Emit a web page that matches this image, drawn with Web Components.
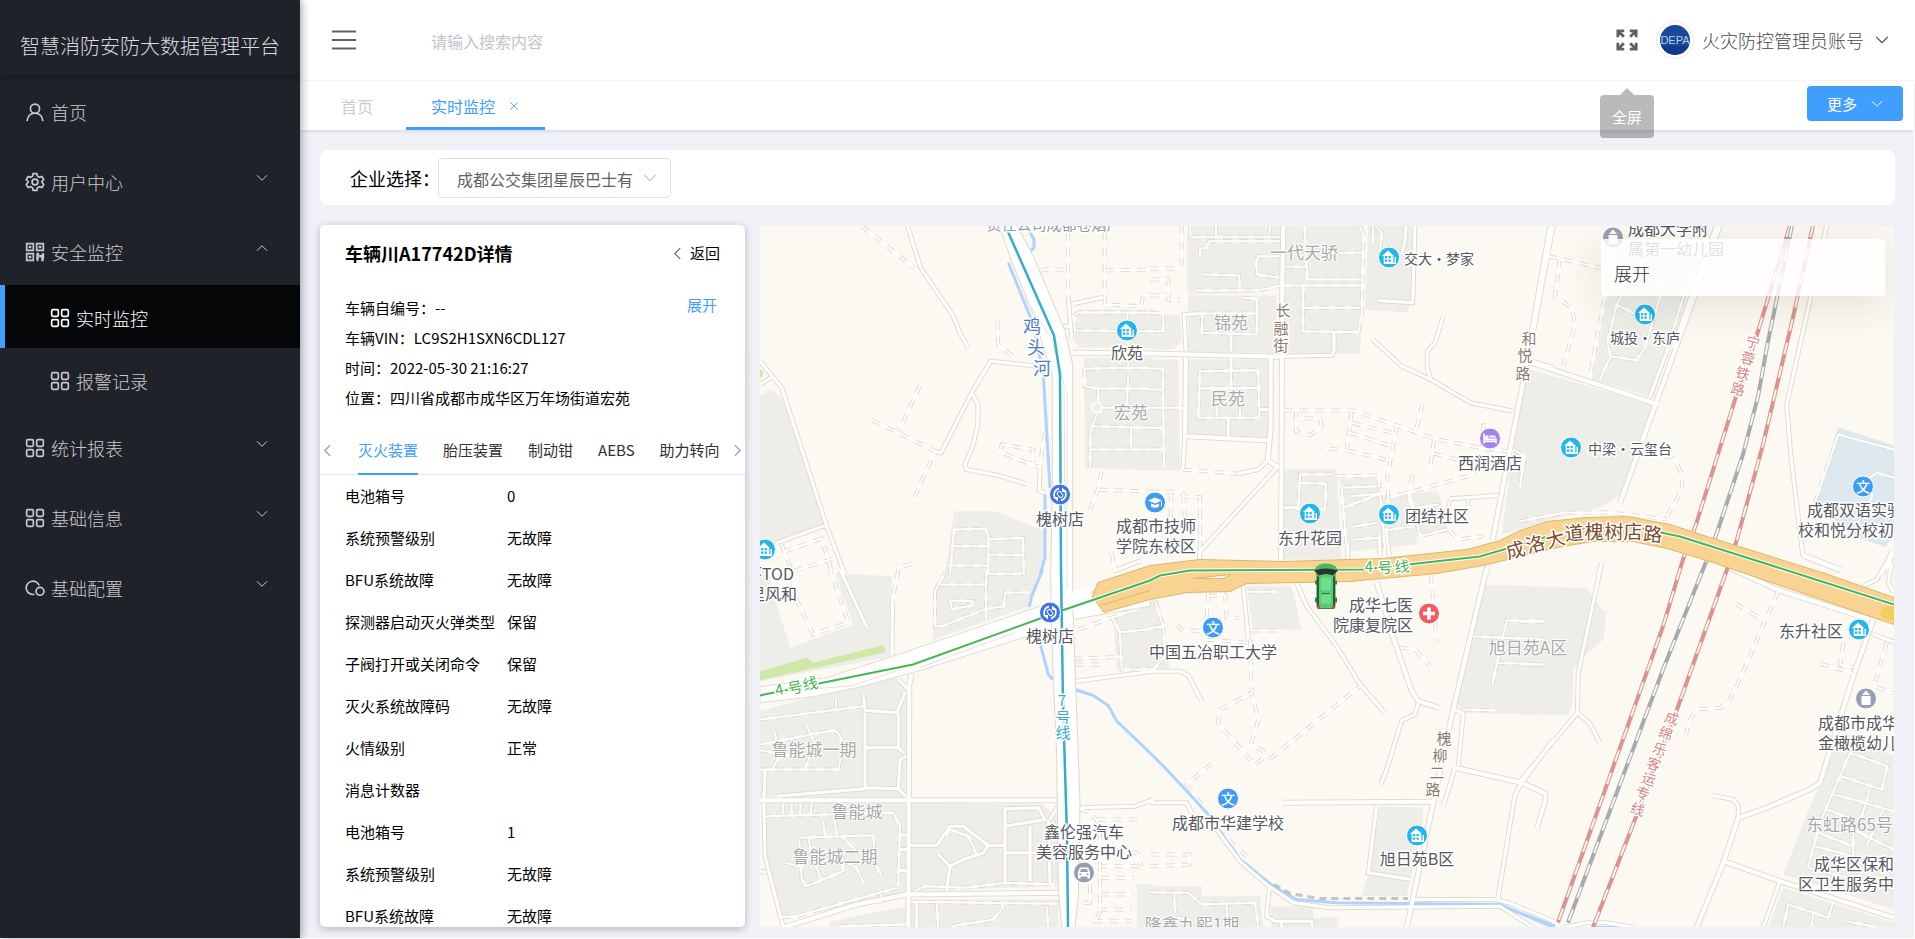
<!DOCTYPE html>
<html lang="zh-CN">
<head>
<meta charset="utf-8">
<title>智慧消防安防大数据管理平台</title>
<style>
  html, body { margin: 0; }
  body { background: #fff; color: #000; font: 400 16px/24px "Noto Sans CJK SC", "Noto Sans", sans-serif; }
</style>
</head>
<body>
<fire-app></fire-app>
<script>
const ICONS = {
  user: '<circle cx="12" cy="8" r="5.5"/><path d="M2.500 23c.6-6 4.300-9.500 9.500-9.500s8.900 3.500 9.500 9.500"/>',
  gear: '<circle cx="12" cy="12" r="3.500"/><path d="M9.800 2h4.400l.8 3 2.300 1.300 3-.9 2.200 3.800-2.200 2.200v1.200l2.200 2.200-2.200 3.800-3-.9-2.300 1.300-.8 3H9.800l-.8-3-2.300-1.300-3 .9-2.200-3.800 2.200-2.200v-1.200L1.500 9.200l2.200-3.800 3 .9L9 5z"/>',
  grid: '<rect x="2" y="2" width="8" height="8" rx="1.500"/><rect x="14" y="2" width="8" height="8" rx="1.500"/><rect x="2" y="14" width="8" height="8" rx="1.500"/><rect x="14" y="14" width="8" height="8" rx="1.500"/>',
  qr: '<path d="M2 2h8v8H2zM14 2h8v8h-8zM2 14h8v8H2zM5.500 5.500h1v1h-1zM17.500 5.500h1v1h-1zM5.500 17.500h1v1h-1z"/><path stroke-width="3" d="M14 14.500h3M15 14v7M20 18h3M21.500 13.500v3M21 19v4M14 21.500h2M17 17h3"/>',
  loops: '<path d="M11.500 19.500A8 8 0 1 1 17 9"/><circle cx="18" cy="16" r="4.700"/>',
  down: '<path d="M2 6.500l10 10 10-10"/>',
  up: '<path d="M2 17.500l10-10 10 10"/>',
  left: '<path d="M17 2L7 12l10 10"/>',
  right: '<path d="M7 2l10 10L7 22"/>',
  close: '<path d="M3 3l18 18M21 3L3 21"/>',
  menu: '<path d="M0 3.500h24M0 12h24M0 20.500h24"/>',
  full: '<path stroke-width="3" d="M2 9V2h7M2.500 2.500L8.500 8.500M15 2h7v7M21.500 2.500l-6 6M2 15v7h7M2.500 21.500l6-6M22 15v7h-7M21.500 21.500l-6-6"/>'
};

/* Registers an element whose open shadow root is filled by render(host). */
function define(name, render) {
  customElements.define(name, class extends HTMLElement {
    connectedCallback() {
      if (this.shadowRoot) return;
      const t = document.createElement('template');
      t.innerHTML = render(this);
      this.attachShadow({ mode: 'open' }).append(t.content.cloneNode(true));
    }
  });
}

define('line-icon', el => `
<style>
  :host { display: block; flex: none; width: var(--icon, 20px); height: var(--icon, 20px); }
  svg { display: block; width: 100%; height: 100%; fill: none; stroke: currentColor; stroke-width: var(--stroke, 2); }
</style>
<svg viewBox="0 0 24 24" aria-hidden="true">${ICONS[el.getAttribute('name')]}</svg>`);

define('nav-item', el => `
<style>
  :host { display: block; }
  a { box-sizing: border-box; display: flex; align-items: center; height: 70px; padding: 3px 32px 0 25px;
      color: #c8c9cc; font-size: 18px; text-decoration: none; }
  :host([sub]) a { height: 63px; padding-left: 50px; }
  :host([active]) a { color: #fff; background: #050608; box-shadow: inset 5px 0 #409eff; }
  span { flex: 1; padding-left: 6px; }
  .arrow { --icon: 12px; margin-bottom: 7px; }
</style>
<a href="#"><line-icon name="${el.getAttribute('icon')}"></line-icon><span><slot></slot></span>
${el.hasAttribute('arrow') ? `<line-icon class="arrow" name="${el.getAttribute('arrow')}"></line-icon>` : ''}</a>`);

define('side-bar', () => `
<style>
  :host { display: block; width: 300px; flex: none; background: #20222a; box-shadow: 2px 0 8px rgba(0,21,41,.35); z-index: 2; font-weight: 300; }
  h1 { box-sizing: border-box; height: 75px; margin: 0; padding: 18px 0 0 20px; color: #dcdde0;
       font-size: 20px; line-height: 56px; font-weight: inherit; box-shadow: 0 6px 2px -1px rgba(0,0,0,.12); }
</style>
<h1>智慧消防安防大数据管理平台</h1>
<nav>
  <nav-item icon="user">首页</nav-item>
  <nav-item icon="gear" arrow="down">用户中心</nav-item>
  <nav-item icon="qr" arrow="up">安全监控</nav-item>
  <nav-item icon="grid" sub active>实时监控</nav-item>
  <nav-item icon="grid" sub>报警记录</nav-item>
  <nav-item icon="grid" arrow="down">统计报表</nav-item>
  <nav-item icon="grid" arrow="down">基础信息</nav-item>
  <nav-item icon="loops" arrow="down">基础配置</nav-item>
</nav>`);

define('top-bar', () => `
<style>
  :host { box-sizing: border-box; display: flex; align-items: center; height: 81px; padding: 0 25px 0 32px; background: #fff; border-bottom: 1px solid #f4f4f5; color: #5f6063; }
  button { padding: 0; border: 0; background: none; color: inherit; font: inherit; display: flex; align-items: center; }
  .menu { --icon: 24px; }
  input { flex: 1; min-width: 0; margin: 2px 0 0 75px; padding: 0; border: 0; outline: 0; font: inherit; }
  input::placeholder { color: #c0c4cc; opacity: 1; }
  .full { position: relative; --icon: 22px; margin-right: 18px; }
  .tip { position: absolute; z-index: 5; top: 66px; left: 50%; transform: translateX(-50%); padding: 10px 12px 9px; border-radius: 4px;
         background: rgba(0,0,0,.27); color: #fff; font-size: 15px; line-height: 24px; white-space: nowrap; }
  .tip::before { content: ""; position: absolute; top: -7px; left: 50%; margin-left: -7px; border: 7px solid transparent; border-top: 0; border-bottom-color: rgba(0,0,0,.27); }
  .avatar { box-sizing: border-box; width: 38px; height: 38px; border: 1px solid #ececec; border-radius: 50%; margin-right: 8px; }
  .avatar svg { display: block; width: 36px; height: 36px; }
  .user { font-size: 18px; font-weight: 300; color: #47484b; --icon: 14px; gap: 11px; }
</style>
<button class="menu" aria-label="菜单"><line-icon name="menu"></line-icon></button>
<input type="text" placeholder="请输入搜索内容" aria-label="搜索">
<button class="full" aria-label="全屏"><line-icon name="full"></line-icon><span class="tip">全屏</span></button>
<div class="avatar"><svg viewBox="0 0 36 36"><defs><clipPath id="c"><circle cx="18" cy="18" r="15"/></clipPath></defs>
<g clip-path="url(#c)"><rect width="36" height="36" fill="#174a9c"/><rect y="24" width="36" height="12" fill="#12398a"/></g>
<text x="18" y="22" text-anchor="middle" font-family="Liberation Sans, sans-serif" font-size="11" font-weight="400" fill="#b9cde9">DEPA</text></svg></div>
<button class="user">火灾防控管理员账号<line-icon name="down"></line-icon></button>`);

define('tab-strip', () => `
<style>
  :host { display: flex; height: 49px; padding-right: 11px; background: #fff; box-shadow: 0 1px 4px rgba(0,0,0,.12); }
  a { box-sizing: border-box; display: flex; align-items: center; padding: 4px 33px 0 41px; color: #ccc; text-decoration: none; border-bottom: 3px solid transparent; }
  a.on { padding: 4px 26px 0 25px; color: #409eff; border-color: #409eff; --icon: 10px; gap: 14px; }
  button { display: flex; align-items: center; gap: 14px; height: 35px; margin: 5px 0 0 auto; padding: 0 20px; border: 0; border-radius: 4px;
           background: #409eff; color: #fff; font: inherit; font-size: 15px; --icon: 12px; }
</style>
<a href="#">首页</a><a href="#" class="on">实时监控<line-icon name="close"></line-icon></a>
<button>更多<line-icon name="down"></line-icon></button>`);

define('company-filter', () => `
<style>
  :host { display: flex; align-items: center; height: 55px; padding-left: 30px; border-radius: 8px; background: #fff; }
  label { font-size: 18px; width: 88px; white-space: nowrap; }
  .box { position: relative; width: 233px; --icon: 14px; color: #c0c4cc; }
  select { display: block; box-sizing: border-box; width: 100%; height: 40px; padding: 2px 36px 0 18px; appearance: none; border: 1px solid #dcdfe6; border-radius: 4px;
           background: #fff; color: #606266; font: inherit; text-overflow: clip; }
  line-icon { position: absolute; right: 14px; top: 13px; pointer-events: none; }
</style>
<label for="s">企业选择：</label>
<div class="box"><select id="s"><option>成都公交集团星辰巴士有限公司</option></select><line-icon name="down"></line-icon></div>`);

const ROWS = [['电池箱号','0'],['系统预警级别','无故障'],['BFU系统故障','无故障'],['探测器启动灭火弹类型','保留'],['子阀打开或关闭命令','保留'],
  ['灭火系统故障码','无故障'],['火情级别','正常'],['消息计数器',''],['电池箱号','1'],['系统预警级别','无故障'],['BFU系统故障','无故障']];

define('vehicle-panel', () => `
<style>
  :host { display: flex; flex-direction: column; width: 425px; flex: none; overflow: hidden; box-sizing: border-box; border-radius: 5px; background: #fff;
          box-shadow: 0 2px 8px rgba(0,0,0,.25); font-size: 15px; }
  header { display: flex; justify-content: space-between; align-items: center; padding: 16px 25px 0; height: 24px; }
  h2 { margin: 0; font-size: 18px; line-height: 24px; }
  button { padding: 0; border: 0; background: none; color: inherit; font: inherit; }
  .back { display: flex; align-items: center; gap: 6px; --icon: 13px; }
  .back line-icon { color: #606266; }
  .info { display: flex; justify-content: space-between; align-items: flex-start; padding: 28px 28px 0 25px; }
  .info button { color: #409eff; }
  p { margin: 0; line-height: 30px; }
  .tabs { flex: none; display: flex; align-items: center; height: 51px; margin-top: 10px; border-bottom: 1px solid #e4e7ed; --icon: 13px; color: #909399; }
  .scroll { display: flex; flex: 1; min-width: 0; gap: 25px; overflow: hidden; height: 52px; margin: 0 10px 0 23px; }
  .scroll a { flex: none; box-sizing: border-box; height: 52px; padding-top: 15px; color: #303133; text-decoration: none; border-bottom: 2px solid transparent; white-space: nowrap; }
  .scroll a.on { color: #409eff; border-color: #409eff; }
  .tabs line-icon { margin: 4px 1px 0; }
  .list { flex: 1; min-height: 0; overflow: hidden; }
  table { border-collapse: collapse; margin-left: 25px; }
  th, td { height: 42px; padding: 0; text-align: left; font-weight: inherit; }
  th { width: 162px; }
</style>
<header><h2>车辆川A17742D详情</h2><button class="back"><line-icon name="left"></line-icon>返回</button></header>
<div class="info"><div><p>车辆自编号：--</p><p>车辆VIN：LC9S2H1SXN6CDL127</p><p>时间：2022-05-30 21:16:27</p><p>位置：四川省成都市成华区万年场街道宏苑</p></div><button>展开</button></div>
<div class="tabs"><line-icon name="left"></line-icon>
<div class="scroll"><a href="#" class="on">灭火装置</a><a href="#">胎压装置</a><a href="#">制动钳</a><a href="#">AEBS</a><a href="#">助力转向装置</a></div>
<line-icon name="right"></line-icon></div>
<div class="list"><table>${ROWS.map(r => `<tr><th scope="row">${r[0]}</th><td>${r[1]}</td></tr>`).join('')}</table></div>`);

/* Map data. Each sheet has its origin on the map plane and is surveyed at three units per map unit. */
const SHEETS = { A:[750,215], B:[1150,215], C:[1520,215], D:[750,570], E:[1150,540], F:[1520,560] };
const AREAS = {
A:`30,545 62,525 95,550 230,930 130,970 30,1005;612,890 735,890 885,950 885,1040 865,1080 585,1080;985,285 1210,285 1210,400 990,400 972,380;1002,430 1210,430 1210,768 1005,760`,
B:`0,300 90,300 95,380 70,405 0,405;0,435 85,435 90,768 0,768;115,33 390,33 390,215 320,235 115,240 110,220 110,75;115,243 380,243 380,415 115,412;400,33 640,33 635,330 630,418 405,418;655,33 795,33 785,260 770,295 645,285;118,435 355,435 355,675 105,660;400,765 560,765 575,1035 400,1035;570,795 690,785 690,845 865,830 895,955 800,970 800,990 600,1010`,
C:`10,460 415,575 310,835 250,875 60,925 -55,960;290,100 540,130 400,550 215,495`,
D:`30,0 425,20 425,260 30,335;585,0 870,0 840,110 550,210 550,60;30,425 340,340 440,325 470,370 465,685 30,680;40,700 470,700 470,970 105,1050 50,900;480,700 880,705 925,750 925,950 480,965;240,1055 470,1010 480,990 925,990 925,1076 240,1076;1160,945 1210,945 1210,1076 1160,1076;1090,140 1210,100 1210,300 1100,305`,
E:`0,1040 155,1040 155,1070 330,1070 340,1165 0,1165;360,1100 490,1100 490,1135 565,1135 565,1165 365,1165;0,180 25,180 60,385 0,395;290,140 425,140 455,270 310,275;690,800 820,805 820,850 770,1070 635,1070 655,1000`,
F:`-110,75 200,86 240,140 250,155 260,155 250,240 200,285 160,330 160,420 145,467 -165,460 -190,430 -135,170;975,520 1122,590 1122,1050 790,945 870,740 950,560;790,985 1122,1090 1122,1104 745,1104`};
const WATER = {
A:`835,45 852,75 852,100 838,112;775,145 850,330 880,480 900,820;885,840 885,1030 870,1080`,
D:`878,0 845,80 838,112;870,220 895,315 908,330;975,360 1030,378 1075,408 1100,455 1200,550`,
E:`0,640 50,690 170,820 270,960 370,1040 440,1080 560,1090 1050,1095 1220,1168`,
F:`0,1060 105,1100;215,1104 300,1104`};
/* wide streets */
const WIDE = {
A:`968,415 1210,417`,
B:`0,417 395,427;400,33 397,200 393,1040;362,430 362,640 353,738 385,758;108,430 105,665 360,678;1200,40 1120,500 1028,975;1140,440 1210,460`,
C:`98,33 30,400;20,440 415,570;600,33 300,865;590,33 460,400`,
D:`478,360 475,1074;30,692 925,692;100,1074 320,1005 470,975 925,970;485,310 475,360`,
E:`1010,85 905,530 770,1165;680,130 735,310 785,455 805,485 868,505;398,790 845,787;915,685 1115,730`,
F:`655,775 610,910 530,1104;610,905 780,965 1122,1075;620,20 770,90 1050,180;1060,180 1000,350 900,670 870,690 740,745 655,775`};
/* narrow streets */
const STREET = {
A:`472,33 512,160 610,305 632,360 655,400;30,440 95,520 230,935 285,1080;30,510 70,485;905,470 865,455 722,440 665,535 573,715 550,710;665,535 684,570 683,630 670,690 645,750 650,765 745,783 828,808;885,835 868,828 870,750;80,985 228,932;955,250 965,370;970,268 1060,248;940,335 965,335;1090,1070 1170,1040`,
B:`400,33 400,100;108,410 102,300 155,297;243,365 243,410;395,425 545,422 552,410 552,355;105,665 98,765;385,755 150,1010 148,1035;353,738 325,765 265,778;668,375 755,455 842,495 962,565 1090,590;842,495 832,460 832,410 855,385 878,310;795,33 788,265 685,258;768,33 765,80 755,120;235,610 235,665;243,430 243,470;330,585 355,585;402,880 445,880;593,1035 593,985;690,1025 688,960;718,1025 708,940;900,853 1045,843;1020,985 1010,1080`,
C:`920,33 800,570 812,720 848,1020 965,1065;390,545 445,400;1115,1010 1085,1080;1122,1010 1100,1065;245,1045 235,1080`,
D:`270,0 350,172;428,100 426,255;345,430 345,655 445,658 468,682;345,535 445,535 462,550;340,375 345,422 440,430 465,370;445,430 445,535;468,560 450,570 445,658;80,680 345,658;45,600 42,690;42,700 45,860 100,1074;30,905 50,910;765,715 765,940;765,718 865,715 885,750 765,770;480,828 560,828 600,770 640,770 715,828 700,850 640,870 600,890 565,855;600,890 590,960;715,828 765,828;765,850 925,848;840,770 840,935;895,750 900,940;445,330 475,360;900,750 925,710;990,715 1155,710 1210,690;975,335 1210,305;500,1000 500,1074;470,797 450,797;470,840 450,840;470,903 450,903`,
E:`0,395 90,395 115,408 155,485;280,140 295,300;440,130 470,200 560,320 630,435 705,520;805,490 795,525 755,543 710,690 692,735;910,510 940,520 925,680;915,685 880,800;1115,730 1185,765 1185,790 1162,865;1115,730 1210,600;1115,730 1095,765 1043,1080;0,790 110,790 125,820;170,830 270,965 350,1035 430,1090 540,1105 1050,1100 1150,1165;790,1080 1043,1080 1090,1095 1210,1145;358,1045 350,1130 375,1145 485,1145 487,1165;680,800 655,1000 785,1020;395,1145 395,1165`,
F:`245,10 175,340 172,460 208,490 240,550;172,460 80,570 0,665 75,700 78,715 50,805;578,708 640,720 655,740 655,775;850,-10 965,35;1105,0 1070,60 1030,80;1115,10 1105,70 1122,100;1060,225 1122,248;780,965 730,1104;130,1104 200,1090 260,1090 340,1104`};
/* lanes and alleys with broken kerbs */
const LANE = {
A:`335,35 430,110 495,162;742,320 745,390 805,440;510,512 445,655;365,617 445,655 555,710 490,855;885,655 868,760 750,712 755,690 850,706 848,742;955,50 955,250;1064,50 1064,270 1175,275 1178,243 1200,243;870,170 880,165 950,165;1064,168 1200,165;975,350 970,305 985,293 1200,295;975,348 1200,350;1132,295 1135,455;1003,462 1200,460;1003,462 1005,515 1045,522 1200,522;1045,522 1045,560;1055,580 1200,580;1135,485 1130,580;1040,600 1022,650 1020,755;1030,635 1200,640;1020,705 1200,705;1143,640 1143,700;1055,770 1045,820 1020,890;1045,825 1200,832;600,1080 612,945 705,943 715,960 715,1080;610,995 712,995;595,1053 715,1053;715,975 818,970 822,1080;715,1020 818,1022;95,990 130,1080;100,1012 215,972 245,1070;130,1070 255,1030;485,1048 445,1060;1085,1015 1095,1070`,
B:`95,33 95,150 85,162 0,162;0,195 55,195 55,255 90,258;0,243 55,243;0,295 40,297 40,350 0,350;122,65 120,33;122,68 390,68;360,33 358,60;198,33 198,65;390,80 178,80 170,100 150,103 150,125;388,125 325,125 318,145 322,180 388,190;158,180 267,182 270,225;138,228 320,228 395,213 635,213;405,157 468,157 465,33;468,100 472,195 635,195;468,115 640,115;630,38 640,60 635,300 625,353 458,350 460,215;458,280 630,280;278,250 320,253 322,360 155,355 157,297 320,297;0,462 38,462 42,755;0,525 40,525;0,580 105,580;0,640 40,640;0,705 40,705;147,470 325,467 328,610 145,610 150,470;150,522 328,520;243,470 243,518;200,520 200,605;270,520 270,605;98,765 265,778;0,832 95,832 105,845 150,848 150,1005;62,835 62,925;100,840 105,920;670,33 668,90;680,38 695,55 690,110;400,588 610,588 760,640 850,672 1000,702 1090,712;605,590 590,708 515,700;605,625 735,657;598,655 730,697;590,708 720,738;740,635 712,790 715,865;818,568 795,655;852,675 840,770;850,717 985,750 1000,670 1000,632 1020,635;985,750 970,780 780,833 720,848;788,780 775,845 790,890;438,590 438,650 480,662 515,635 510,612 440,612;1090,705 1125,725 1110,815;548,780 450,780 445,885 525,885 528,808 450,805;560,785 685,783 688,815 575,820;600,845 690,838 580,880;608,937 680,925;615,975 690,970;575,820 590,1000;690,840 705,1000;780,835 810,965 890,945;800,880 865,870;705,948 790,935;900,853 895,880 900,950 925,975 1000,965;955,850 955,880`,
C:`120,130 105,245 155,280 165,330 130,455;85,125 240,160;270,160 210,485;330,200 290,270 262,385 272,425 240,495;272,425 350,437 375,400 425,230 415,200 320,175;290,270 385,320;325,100 325,150 540,100;455,360 530,120;0,920 130,895 250,893 330,900 440,915;440,905 485,830 487,780 460,730 430,725;5,720 10,740 0,820;885,865 955,660 1122,705;1122,790 1070,775 1050,790 1055,850 1015,925`,
D:`445,0 425,105 425,200;95,0 190,195 295,158 240,0;570,45 708,45 710,0;708,45 708,150;715,13 820,13 822,0;600,93 670,95 665,108 605,120 600,93;555,65 555,170 575,170 710,118 762,110 765,70 838,68;555,65 585,10;30,450 340,410;258,390 258,415;30,600 265,600 280,525 265,490 250,482 30,525;72,482 90,560 65,600;168,465 195,520 165,600;30,542 130,560;40,740 430,730 450,770 445,950;98,700 98,735;125,700 125,735;152,700 150,735;185,700 182,735;148,810 155,930 170,950 280,905 278,860;150,805 370,797 375,880 395,920;175,805 185,855 215,935;220,755 225,800;255,755 260,800;275,800 325,850;105,880 150,890;290,880 320,895 340,940;95,1042 135,1042 440,955;390,960 395,985;495,965 525,950 650,955 765,940 915,945;590,950 590,965;590,800 600,780 655,800 680,855;485,997 925,1003;560,1005 565,1074;605,1070 730,1050 758,1015 755,1003;890,1010 895,1074;270,1070 470,1065;1085,140 1110,190 1115,300 1210,300;1110,188 1210,178;985,180 1200,105;970,268 1110,262;975,285 1060,285;1040,750 1160,750;1045,850 1160,850 1175,890;1045,890 1165,890;1050,925 1150,925;1050,975 1150,975;1045,1020 1145,1020;1030,1055 1145,1055;990,720 1025,730 1050,770 1050,1030 1035,1055;1000,1000 1020,1000 1020,930`,
E:`0,265 40,262 15,185;40,262 45,350 10,390;175,160 165,300 290,310;175,170 225,165 230,235 265,235;290,157 380,157;305,273 395,273;80,255 95,272 165,275;300,300 305,460 212,510 203,550 315,677 345,650 340,635 303,615 325,540 305,460;358,660 630,440;750,325 795,330 840,380;843,105 850,200 862,310;970,290 1180,300;1180,243 1070,243 1050,330 1027,435;1040,370 1180,375;940,510 1037,513;185,672 110,735 165,810;0,945 118,945 118,975 0,980;200,870 290,950;0,1058 115,1060 155,1095 315,1090 325,1165;73,1060 75,1120;230,1095 230,1130;75,1135 120,1140`,
F:`0,187 72,187;0,315 72,315;775,95 735,185 690,290 650,380 625,430 600,445 530,450 510,480 498,525;648,133 735,185;970,250 960,315 1000,325;900,312 1000,342;1100,250 1062,380 1122,402;990,580 1102,620 1085,690 965,650;945,705 1122,755;990,580 900,790 865,920;1050,690 1020,790;920,750 1000,780;1090,750 1040,860;895,820 1000,860;885,860 1000,890;1000,810 1000,890;1000,810 1122,870;865,925 1122,990;805,1035 925,1075 940,1025;805,1035 790,1100;980,1085 1075,1104;880,1065 875,1100`};
const HOUSE='<path fill="#fff" fill-rule="evenodd" d="M-1-7L-7-1.500h1.700V6.500H7V-.5H5.500v5.500H4.300V-1.500H5zM-4-1.500h2.300V.8H-4zM-.5-1.500h2.300V.8H-.5zM-4 2h2.300v2.300H-4zM-.5 2h2.300v2.300H-.5z"/>';
const GLYPH = {
  house:['#22b5ee',HOUSE],
  school:['#3e9bf6','<text text-anchor="middle" y="5" font-size="14" font-weight="500" fill="#fff">文</text>'],
  cap:['#3e9bf6','<path fill="#fff" d="M0-5l7 3-7 3-7-3zM-4 1l4 1.500L4 1v3Q0 6.500-4 4zM6-1h1v5H6z"/>'],
  metro:['#3f74e4','<path fill="none" stroke="#fff" stroke-width="1.600" d="M-4.200 4.200A6 6 0 0 1-1-5.900M4.200-4.200A6 6 0 0 1 1 5.900"/><path fill="#fff" d="M-7 2.500h5v4.500zM7-2.500H2V-7z"/><rect x="-2" y="-3" width="4" height="6" rx="1" fill="none" stroke="#fff" transform="rotate(-35)"/>'],
  hotel:['#a583ee','<path stroke="#fff" stroke-width="1.600" fill="none" d="M-6-5V5M6 0v5M-6 3H6"/><path fill="#fff" d="M-5-3h3.500v3H6v2H-5zM-.5-3H4q2 0 2 2H-.5z"/>'],
  hospital:['#f25c5e','<path fill="#fff" d="M-1.800-6h3.600v4.200H6v3.600H1.800V6h-3.600V1.800H-6v-3.600h4.200z"/>'],
  kid:['#979fb7','<path fill="#fff" d="M-1-7.500h2L2-5h1.500v1.500h-7V-5H-2zM-4.500-2.500h9v8q0 1-1 1h-7q-1 0-1-1z"/>'],
  car:['#979fb7','<path fill="#fff" fill-rule="evenodd" d="M-4-5h8L6-.5V6H3.500V4h-7v2H-6V-.5zM-3-3.500L-4-.5h8l-1-3zM-4.500 1h2v1.500h-2zM2.500 1h2v1.500h-2z"/>']};
const POIS = [['house',1127,331],['house',765,550],['metro',1060,495],['metro',1050,613],['car',1084,873],['cap',1155,503],['house',1389,258],['hotel',1490,439],['house',1310,514],['house',1389,515],['kid',1613,238],['house',1645,315],['house',1571,448],['school',1863,487],['school',1213,628],['hospital',1429,614],['school',1228,799],['house',1417,836],['house',1859,630],['kid',1866,699]];
/* label, x, y, style, anchor; a bar starts a second line */
const LABELS = [['欣苑',1127,353],['槐树店',1060,519],['环TOD',794,574,'p','end'],['里风和',797,594,'p','end'],['槐树店',1050,636],['鑫伦强汽车|美容服务中心',1084,832],['成都市技师|学院东校区',1156,526],
['交大·梦家',1404,259,'q','start'],['西润酒店',1490,463],['东升花园',1310,538],['团结社区',1405,516,'p','start'],['成都大学附|属第一幼儿园',1628,229,'p','start'],['城投·东庐',1645,338,'q'],['中梁·云玺台',1588,449,'q','start'],
['成都双语实验学',1807,510,'p','start'],['校和悦分校初中',1798,530,'p','start'],['中国五冶职工大学',1213,652],['成华七医|院康复院区',1413,605,'p','end'],['成都市华建学校',1228,823],['旭日苑B区',1417,859],['东升社区',1843,631,'p','end'],
['成都市成华区|金橄榄幼儿园',1818,723,'p','start'],['成华区保和社',1814,864,'p','start'],['区卫生服务中心',1798,884,'p','start'],
['责任公司成都卷烟厂',1054,225,'t'],['宏苑',1131,413,'g'],['鲁能城一期',814,750,'g'],['鲁能城',857,812,'g'],['鲁能城二期',835,857,'g'],['一代天骄',1304,253,'g'],['锦苑',1231,323,'g'],['民苑',1228,399,'g'],['旭日苑A区',1528,648,'g'],['隆鑫九熙1期',1192,925,'g'],['东虹路65号院',1806,825,'g','start']];
/* names that follow a line: style, then char,x,y,angle */
const RUNS = [['w','鸡,1032,325 头,1036,346 河,1042,367'],['m4','4,779,689,-12 号,795,687,-12 线,810,683,-12'],['m4','4,1369,566 号,1385,567,-3 线,1402,566,-5'],['m7','7,1062,700 号,1063,717 线,1063,732'],
['s','长,1283,310 融,1281,328 街,1281,345'],['s','和,1529,338 悦,1525,355 路,1523,373'],['s','槐,1444,738 柳,1440,755 二,1437,772 路,1433,789'],
['h','成,1515,549,-15 洛,1535,543,-15 大,1555,538,-15 道,1574,532,-5 槐,1594,531 树,1614,531 店,1633,531 路,1653,533,5'],
['r','宁,1753,342,15 蓉,1748,358,15 铁,1743,373,15 路,1738,389,15'],['r','成,1672,718,18 绵,1666,733,18 乐,1660,749,18 客,1654,764,18 运,1649,779,18 专,1643,793,18 线,1638,809,18']];
const shapes = (set, close) => Object.entries(set).map(([k, v]) => v.split(';').map(l =>
  'M' + l.split(' ').map(p => { const [x, y] = p.split(','); return (SHEETS[k][0] + x / 3).toFixed(1) + ' ' + (SHEETS[k][1] + y / 3).toFixed(1); }).join('L') + (close ? 'z' : '')).join('')).join('');
const road = (set, w, casing, dash) => { const d = shapes(set);
  return [`<path d="${d}" fill="none" stroke="#e1dccf" stroke-width="${casing}"${dash ? ' stroke-dasharray="9 7"' : ''}/>`, `<path d="${d}" fill="none" stroke="#fff" stroke-width="${w}" stroke-linejoin="round"/>`]; };
const rail = (pts, c) => `<polyline points="${pts}" fill="none" stroke="${c}" stroke-width="4"/><polyline points="${pts}" fill="none" stroke="#fcf6f1" stroke-width="2" stroke-dasharray="12 12"/>`;
const label = ([t, x, y, c = 'p', a = 'middle']) => { const [one, two] = t.split('|');
  return `<text class="label ${c}" x="${x}" y="${y - 1}" text-anchor="${a}">${one}${two ? `<tspan x="${x}" dy="20">${two}</tspan>` : ''}</text>`; };
const METRO4 = '760,696 913,665 1040,619 1062,611 1150,581 1160,576 1190,571 1363,570 1480,557 1507,549 1540,539 1587,528 1637,528 1680,537 1800,575 1894,605';
const METRO7 = '1007,230 1054,336 1060,375 1061,570 1063,703 1067,837 1068,928';

define('city-map', () => {
  const wide = road(WIDE, 4, 6), st = road(STREET, 3, 5), lane = road(LANE, 2, 4, true);
  return `
<style>
  :host { display: block; position: relative; overflow: hidden; background: #fcf9f2; flex: 1; min-width: 0; }
  svg { position: absolute; inset: 0; width: 100%; height: 100%; }
  text { dominant-baseline: central; }
  .icon text { dominant-baseline: auto; }
  .label { paint-order: stroke; stroke: #fff; stroke-width: 3px; stroke-linejoin: round; }
  .p { font-size: 16px; fill: #55585e; } .q { font-size: 14px; fill: #55585e; }
  .g { font-size: 17px; fill: #a8a8a8; stroke-width: 2px; } .t { font-size: 15px; fill: #9a9a9a; }
  .w { font-size: 18px; fill: #4b7dbe; } .s { font-size: 15px; fill: #8c7b6b; } .h { font-size: 19px; fill: #7b4c2b; }
  .m4 { font-size: 15px; fill: #46b552; } .m7 { font-size: 15px; fill: #35adc8; } .r { font-size: 14px; fill: #d98582; }
  .fold { position: absolute; top: 13px; right: 9px; box-sizing: border-box; width: 284px; height: 57px; padding: 10px 13px 0; border-radius: 4px; background: rgba(255,255,255,.82);
          box-shadow: 0 8px 40px rgba(60,50,20,.12); border: 0; text-align: left; color: #303133; font: inherit; font-weight: 300; font-size: 18px; line-height: 24px; }
</style>
<svg viewBox="760 226 1134 702" preserveAspectRatio="xMidYMid slice">
<path fill="#eeede8" d="${shapes(AREAS, 1)}"/>
<path fill="#fcf9f2" d="${shapes({D:'55,0 75,90 120,235 310,165 250,0'},1)}"/>
<path fill="#dde9ee" d="${shapes({C:'955,638 1122,693 1122,950 1098,998 1000,965 885,865'},1)}"/>
<path fill="#cfe8a6" d="${shapes({D:'30,305 170,265 188,280 395,228 408,240 400,250 30,332'},1)}"/><circle cx="759" cy="374" r="4" fill="#cfe8a6"/>
${lane[0]}${st[0]}${wide[0]}${lane[1]}
<path d="${shapes(WATER)}" fill="none" stroke="#aed3fe" stroke-width="3"/>
${st[1]}${wide[1]}
<circle cx="1097" cy="408" r="5" fill="#eeede8" stroke="#fff" stroke-width="2"/>
<path d="M1274 885l16 9 30 5h88" fill="none" stroke="#c3c3c0" stroke-width="3" stroke-dasharray="7 5"/>
<path fill="#fff" stroke="#e1dccf" d="${shapes({D:'30,352 230,325 460,250 870,110 1200,20 1200,110 970,150 880,185 520,300 340,350 200,380 30,400'},1)}"/>
<path fill="#fff" stroke="#ded8ca" d="${shapes({A:'748,33 785,140 850,300 907,480 907,800 902,1080 905,1265 920,1625 925,2025 935,2140 975,2140 985,2045 990,1765 968,1165 968,450 945,350 850,125 800,33'},1)}"/>
<path d="M1018 288l34 52 12 45 1 140M915 665l-62 21-90 8M1015 633l-95 35M1067 390v200" fill="none" stroke="#e6e1d6"/>
<path d="M1040 620l50-16v-18l-50 18z" fill="#fff"/>
${rail('1790,226 1758,332 1736,397 1696,525 1683,560 1663,627 1558,923','#dc938f')}
${rail('1792,226 1768,342 1758,397 1743,455 1717,533 1707,560 1663,670 1568,923','#a5abb0')}
${rail('1813,226 1793,318 1763,445 1737,540 1727,570 1677,710 1635,820 1593,928','#dc938f')}
<path d="M1092 597L1098 583 1150 566 1200 560 1283 562 1383 559 1467 550 1500 541 1520 531 1547 522 1587 518 1627 517 1670 525 1707 537 1825 574 1894 598V625L1710 562 1667 549 1633 542 1593 542 1557 548 1520 557 1483 566 1437 574 1350 582 1247 584 1230 592 1187 593 1150 600 1104 613z" fill="#f9d391" stroke="#e0b56c" stroke-linejoin="round"/>
<path d="M1193 579l38-4-8 4zM1100 606l50-15" fill="#fff" stroke="#e0b56c"/>
<path d="M1894 606c-10 0-14 4-14 8s4 7 14 7z" fill="#f2cf58"/>
<polyline points="${METRO4}" fill="none" stroke="#fff" stroke-width="4"/><polyline points="${METRO4}" fill="none" stroke="#46b552" stroke-width="2"/>
<polyline points="${METRO7}" fill="none" stroke="#35adc8" stroke-width="2.500"/>
<g class="icon">${POIS.map(([k,x,y]) => `<g transform="translate(${x} ${y})"><circle r="10.500" fill="${GLYPH[k][0]}" stroke="#fff"/>${GLYPH[k][1]}</g>`).join('')}</g>
${LABELS.map(label).join('')}
${RUNS.map(([c,r]) => r.split(' ').map(i => { const [t,x,y,d=0] = i.split(','); return `<text class="label ${c}" text-anchor="middle" transform="translate(${x} ${y}) rotate(${d})">${t}</text>`; }).join('')).join('')}
<g transform="translate(1326 587)"><path d="M-11-6h3v4h-3zM8-6h3v4H8zM-11 11h3v5h-3zM8 11h3v5H8z" fill="#4b7a52"/><rect x="-9" y="-18" width="18" height="40" rx="2" fill="#55cb74" stroke="#2c8f47"/>
<path d="M-8-10V20M8-10V20" stroke="#203a28" stroke-width="1.500"/><path d="M-11-18Q-8-23 0-23T11-18L10-14H-10z" fill="#42bd66"/><path d="M-12-16q12-4 24 0l-5 5q-7-3-14 0z" fill="#2d3530"/>
<rect x="-5" y="-9" width="10" height="13" rx="1" fill="#6fdd8b"/><rect x="-5" y="8" width="10" height="9" rx="1" fill="#6fdd8b"/><path d="M-4 7h8" stroke="#267c3c"/><path d="M-9 19h3v3h-3zM6 19h3v3H6z" fill="#e0452e"/></g>
</svg>
<button class="fold">展开</button>`;
});

define('fire-app', () => `
<style>
  :host { box-sizing: border-box; display: flex; height: 100vh; padding: 0 1px 1px 0; overflow: hidden; }
  main { flex: 1; min-width: 0; display: flex; flex-direction: column; background: #f0f2f7; }
  top-bar { flex: none; position: relative; z-index: 1; } tab-strip { flex: none; }
  .body { flex: 1; min-height: 0; display: flex; flex-direction: column; gap: 20px; padding: 20px 19px 11px 20px; }
  company-filter { flex: none; }
  .split { flex: 1; min-height: 0; display: flex; gap: 15px; }
  city-map { margin: 1px 1px 0 0; }
</style>
<side-bar></side-bar>
<main><top-bar></top-bar><tab-strip></tab-strip>
<div class="body"><company-filter></company-filter><div class="split"><vehicle-panel></vehicle-panel><city-map></city-map></div></div></main>`);
</script>
</body>
</html>
